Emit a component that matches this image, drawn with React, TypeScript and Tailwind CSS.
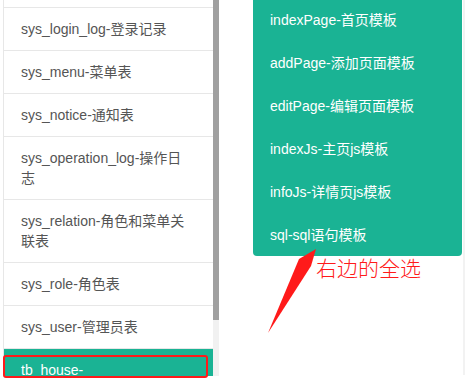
import React from "react";

const leftItems: { text: string; two?: boolean }[] = [
  { text: "sys_login_log-登录记录" },
  { text: "sys_menu-菜单表" },
  { text: "sys_notice-通知表" },
  { text: "sys_operation_log-操作日志", two: true },
  { text: "sys_relation-角色和菜单关联表", two: true },
  { text: "sys_role-角色表" },
  { text: "sys_user-管理员表" },
];

const rightItems = [
  "indexPage-首页模板",
  "addPage-添加页面模板",
  "editPage-编辑页面模板",
  "indexJs-主页js模板",
  "infoJs-详情页js模板",
  "sql-sql语句模板",
];

export default function App() {
  return (
    <div className="relative w-[465px] h-[383px] bg-white overflow-hidden font-['Liberation_Sans','Noto_Sans_CJK_SC',sans-serif] text-[14px] leading-[20px]">
      <div className="flex h-full">
        {/* left list */}
        <div className="flex h-[376px] pl-[3px]">
          <div className="w-[210px] h-full overflow-hidden border-l border-[#e7e7e7] flex flex-col">
            <div className="h-[8px] shrink-0 border-b border-[#e7e7e7]" />
            {leftItems.map((it) => (
              <div
                key={it.text}
                className="shrink-0 border-b border-[#e7e7e7] pl-[17px] pr-[26px] py-[11px] text-[#555555]"
              >
                {it.text}
              </div>
            ))}
            <div className="shrink-0 bg-[#1ab394] text-white pl-[17px] pr-[26px] pt-[11px] pb-[11px]">
              tb_house-
            </div>
          </div>
          <div className="w-[6px] h-full flex flex-col bg-[#f1f1f1]">
            <div className="h-[320px] bg-[#a0a0a0]" />
          </div>
        </div>

        {/* right dropdown */}
        <div className="ml-[34px] w-[209px] h-[256px] bg-[#1ab394] rounded-b-[4px] overflow-hidden">
          <div className="-mt-[2px] flex flex-col">
            {rightItems.map((t) => (
              <div key={t} className="h-[43px] flex items-center pl-[17px] text-white">
                {t}
              </div>
            ))}
          </div>
        </div>
        <div className="ml-auto w-[2px] h-[375px] bg-[#f2f2f2]" />
      </div>

      {/* annotations */}
      <div className="absolute left-[3px] top-[355px] w-[205px] h-[23px] border-[2px] border-[#ff1a1a] rounded-[3px]" />
      <svg className="absolute left-0 top-0" width="465" height="383" viewBox="0 0 465 383">
        <polygon points="268,333 299,259 316,249 311,266" fill="#ff1a1a" />
      </svg>
      <div className="absolute left-[316px] top-[253px] text-[21px] leading-[28px] text-[#ff1a1a] font-['Noto_Sans_CJK_SC',sans-serif] font-light">
        右边的全选
      </div>
    </div>
  );
}
